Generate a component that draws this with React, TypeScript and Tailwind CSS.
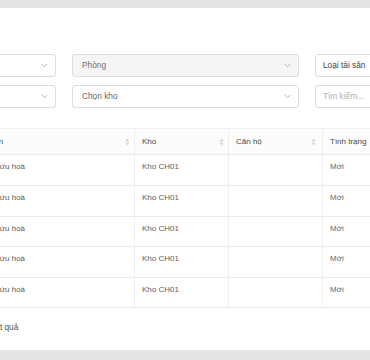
import React from "react";

const rows = [
  { name: "Bình cứu hoà", kho: "Kho CH01", canHo: "", status: "Mới", h: "h-[31px]" },
  { name: "Bình cứu hoà", kho: "Kho CH01", canHo: "", status: "Mới", h: "h-[31px]" },
  { name: "Bình cứu hoà", kho: "Kho CH01", canHo: "", status: "Mới", h: "h-[30px]" },
  { name: "Bình cứu hoà", kho: "Kho CH01", canHo: "", status: "Mới", h: "h-[31px]" },
  { name: "Bình cứu hoà", kho: "Kho CH01", canHo: "", status: "Mới", h: "h-[30px]" },
];

function Chevron() {
  return (
    <svg width="7" height="5" viewBox="0 0 7 5" className="shrink-0">
      <polyline points="0.8,1 3.5,3.7 6.2,1" fill="none" stroke="#a8a8a8" strokeWidth="0.9" />
    </svg>
  );
}

function SortIcon() {
  return (
    <svg width="5" height="8" viewBox="0 0 5 8" className="shrink-0">
      <polygon points="2.5,0.5 4.6,3.2 0.4,3.2" fill="#d2d2d2" />
      <polygon points="0.4,4.8 4.6,4.8 2.5,7.5" fill="#d2d2d2" />
    </svg>
  );
}

function Select({
  label,
  tone,
  disabled,
}: {
  label: string;
  tone: string;
  disabled?: boolean;
}) {
  return (
    <div
      className={`flex h-[23px] w-[227px] shrink-0 items-center justify-between rounded-[3px] border border-[#dcdcdc] pl-[9px] pr-[7px] ${
        disabled ? "bg-[#f5f5f5]" : "bg-white"
      }`}
    >
      <span className={tone}>{label}</span>
      <Chevron />
    </div>
  );
}

function Field({ label, tone }: { label: string; tone: string }) {
  return (
    <div className="flex h-[23px] w-[227px] shrink-0 items-center rounded-[3px] border border-[#dcdcdc] bg-white px-[7px]">
      <span className={tone}>{label}</span>
    </div>
  );
}

export default function App() {
  return (
    <div className="h-[360px] w-[370px] overflow-hidden bg-[#e4e4e4] pt-[8px] font-['Liberation_Sans',Arial,sans-serif] text-[8.3px] leading-[12.5px]">
      <div className="h-[342px] overflow-hidden bg-white pt-[46px]">
        <div className="flex flex-col gap-[8px]">
          <div className="ml-[-171px] flex gap-[16px]">
            <Select label="Toà nhà" tone="text-[#555]" />
            <Select label="Phòng" tone="text-[#6e6e6e]" disabled />
            <Field label="Loại tài sản" tone="text-[#444]" />
          </div>
          <div className="ml-[-171px] flex gap-[16px]">
            <Select label="Tầng" tone="text-[#555]" />
            <Select label="Chọn kho" tone="text-[#666]" />
            <Field label="Tìm kiếm..." tone="text-[#b3b3b3]" />
          </div>
        </div>

        <div className="ml-[-31px] mt-[20px] w-[460px] border-t border-[#efefef] text-[8px] leading-[12px]">
          <div className="flex h-[26px] border-b border-[#ebebeb] bg-[#fcfcfc] text-[#4a4a4a]">
            <div className="flex w-[165px] shrink-0 items-center justify-between pl-[8px] pr-[4px]">
              <span>Tài sản</span>
              <SortIcon />
            </div>
            <div className="flex w-[94px] shrink-0 items-center justify-between border-l border-[#efefef] pl-[7px] pr-[4px]">
              <span>Kho</span>
              <SortIcon />
            </div>
            <div className="flex w-[94px] shrink-0 items-center justify-between border-l border-[#efefef] pl-[7px] pr-[6px]">
              <span>Căn hộ</span>
              <SortIcon />
            </div>
            <div className="flex w-[106px] shrink-0 items-center border-l border-[#efefef] pl-[7px]">
              <span>Tình trạng</span>
            </div>
          </div>
          {rows.map((r, i) => (
            <div key={i} className={`flex ${r.h} border-b border-[#ebebeb] text-[#5c5c5c]`}>
              <div className="w-[165px] shrink-0 pl-[8px] pt-[6px]">{r.name}</div>
              <div className="w-[94px] shrink-0 border-l border-[#efefef] pl-[7px] pt-[6px]">{r.kho}</div>
              <div className="w-[94px] shrink-0 border-l border-[#efefef] pl-[7px] pt-[6px]">{r.canHo}</div>
              <div className="w-[106px] shrink-0 border-l border-[#efefef] pl-[7px] pt-[6px] text-[#666]">
                {r.status}
              </div>
            </div>
          ))}
        </div>

        <div className="ml-[-37px] mt-[13px] text-[#555]">Tổng 5 kết quả</div>
      </div>
    </div>
  );
}
